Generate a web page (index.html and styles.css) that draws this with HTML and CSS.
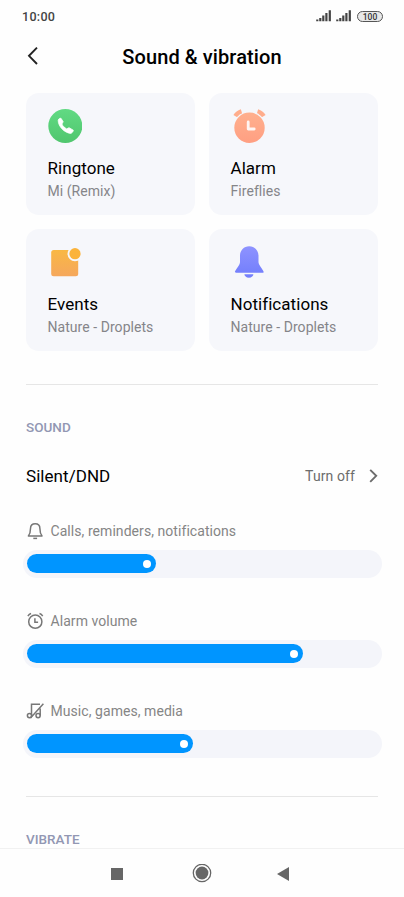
FILE: index.html
```html
<!DOCTYPE html>
<html lang="en">
<head>
  <meta charset="UTF-8">
  <meta name="viewport" content="width=device-width, initial-scale=1.0">
  <title>Sound &amp; vibration</title>
  <link rel="stylesheet" href="styles.css">
</head>
<body>
  <div class="status-bar">
    <span class="time">10:00</span>
    <div class="status-icons">
      <svg width="16" height="12" viewBox="0 0 16 12">
        <path d="M1.3 9.500v1.700M4.300 8v3.200M7.300 5.500v5.700M10.400 3v8.200M13.800 .2v11" stroke="#444" stroke-width="2.200"/>
      </svg>
      <svg width="16" height="12" viewBox="0 0 16 12">
        <path d="M1.3 9.500v1.700M4.300 8v3.200M7.300 5.500v5.700M10.400 3v8.200M13.800 .2v11" stroke="#444" stroke-width="2.200"/>
      </svg>
      <span class="battery">100</span>
    </div>
  </div>

  <header class="header">
    <svg width="12" height="20" viewBox="0 0 12 20">
      <path d="M11 1.600 3 9.800l8 8.200" fill="none" stroke="#222" stroke-width="1.900"/>
    </svg>
    <h1>Sound &amp; vibration</h1>
  </header>

  <main class="content">
    <div class="cards">
      <div class="card">
        <svg width="34" height="34" viewBox="0 0 34 34">
          <defs>
            <linearGradient id="green" x1="0" y1="0" x2="0" y2="1">
              <stop offset="0" stop-color="#61da83"/>
              <stop offset="1" stop-color="#50c66e"/>
            </linearGradient>
          </defs>
          <circle cx="17.300" cy="17" r="17" fill="url(#green)"/>
          <path d="M10.200 11.200c.3-1.400 1.600-2.100 2.800-1.900l2.200 3.500-1.300 2.200c.8 2 2.500 3.600 4.800 4.900l2.300-1.200 4.300 2.500c-.2 1.600-1.300 3-2.800 3.200-5.900-.6-12.500-7-12.300-13.200z" fill="#fff" stroke="#fff" stroke-width=".8" stroke-linejoin="round"/>
        </svg>
        <div class="card-title">Ringtone</div>
        <div class="card-sub">Mi (Remix)</div>
      </div>
      <div class="card">
        <svg width="36" height="34" viewBox="0 0 36 34">
          <defs>
            <linearGradient id="peach" x1="0" y1="0" x2="0" y2="1">
              <stop offset="0" stop-color="#ffb08e"/>
              <stop offset="1" stop-color="#ff9f82"/>
            </linearGradient>
          </defs>
          <path d="M4.300 7.200Q6.500 3.600 10.500 2.400M26.500 2.400Q30.500 3.600 32.700 7.200" fill="none" stroke="#ffad8c" stroke-width="4.400"/>
          <circle cx="18.500" cy="18.700" r="16.200" fill="#f6f7fb"/>
          <circle cx="18.500" cy="18.700" r="15.200" fill="url(#peach)"/>
          <path d="M17.200 13v7h6" fill="none" stroke="#fff5f2" stroke-width="2.800" stroke-linecap="round" stroke-linejoin="round"/>
        </svg>
        <div class="card-title">Alarm</div>
        <div class="card-sub">Fireflies</div>
      </div>
      <div class="card">
        <svg width="34" height="34" viewBox="0 0 34 34">
          <defs>
            <linearGradient id="orange" x1="0" y1="0" x2="0" y2="1">
              <stop offset="0" stop-color="#f9b844"/>
              <stop offset="1" stop-color="#f5a75c"/>
            </linearGradient>
          </defs>
          <rect x="3.200" y="5" width="27" height="26.300" rx="2.500" fill="url(#orange)"/>
          <circle cx="27" cy="8.700" r="7.500" fill="#f6f7fb"/>
          <circle cx="27" cy="8.700" r="5.600" fill="#fbb33a"/>
        </svg>
        <div class="card-title">Events</div>
        <div class="card-sub">Nature - Droplets</div>
      </div>
      <div class="card">
        <svg width="36" height="34" viewBox="0 0 36 34">
          <defs>
            <linearGradient id="violet" x1="0" y1="0" x2="0" y2="1">
              <stop offset="0" stop-color="#8e93ff"/>
              <stop offset="1" stop-color="#7580fc"/>
            </linearGradient>
          </defs>
          <path d="M18.200 1.200c5.400 0 9.300 4.200 9.300 9.500v6.600c0 2.200 2.500 5 4.800 8.700.7 1.200.1 1.800-.9 1.800H5.200c-1 0-1.700-.6-1-1.800C6.600 22.300 9 19.500 9 17.300v-6.600c0-5.300 3.900-9.500 9.200-9.500z" fill="url(#violet)"/>
          <path d="M13.400 29.300h9c0 1.500-1.800 3.500-4.500 3.500s-4.500-2-4.500-3.500z" fill="#7580fc"/>
        </svg>
        <div class="card-title">Notifications</div>
        <div class="card-sub">Nature - Droplets</div>
      </div>
    </div>

    <hr class="divider">

    <section>
      <h2>SOUND</h2>
      <div class="row">
        <span class="row-title">Silent/DND</span>
        <span class="row-value">Turn off</span>
        <svg width="9" height="14" viewBox="0 0 9 14">
          <path d="M1.200 .8 7.200 6.800l-6 6" fill="none" stroke="#6c6c6c" stroke-width="1.900"/>
        </svg>
      </div>

      <div class="volume">
        <div class="volume-label">
          <svg width="18" height="18" viewBox="0 0 18 18" fill="none" stroke="#777" stroke-width="1.500">
            <path d="M4.500 6.500C4.500 3.300 6.300 1.700 9.200 1.700s4.700 1.600 4.700 4.800c0 3.500.4 5.300 2.100 7.400H2.400c1.700-2.100 2.100-3.900 2.100-7.400z" stroke-linejoin="round"/>
            <path d="M7.300 16.400h3.800"/>
          </svg>
          Calls, reminders, notifications
        </div>
        <div class="slider"><div class="fill" style="width: 129px"></div></div>
      </div>

      <div class="volume">
        <div class="volume-label">
          <svg width="18" height="18" viewBox="0 0 18 18" fill="none" stroke="#777" stroke-width="1.500">
            <circle cx="9.300" cy="9.700" r="6.600"/>
            <path d="M8.900 6.200v4h3.200M1.900 4.100q1.200-2 3.200-2.600M13.500 1.500q2 .6 3.200 2.600"/>
          </svg>
          Alarm volume
        </div>
        <div class="slider"><div class="fill" style="width: 276px"></div></div>
      </div>

      <div class="volume">
        <div class="volume-label">
          <svg width="18" height="18" viewBox="0 0 18 18" fill="none" stroke="#777" stroke-width="1.500">
            <path d="M5.500 13.500V2.300h8.500M14.200 6.500v7M17.400 1.700 4.500 16"/>
            <circle cx="3.500" cy="13.600" r="2.100"/>
            <circle cx="12.100" cy="13.600" r="2.100"/>
          </svg>
          Music, games, media
        </div>
        <div class="slider"><div class="fill" style="width: 166px"></div></div>
      </div>
    </section>

    <hr class="divider">

    <section>
      <h2>VIBRATE</h2>
    </section>
  </main>

  <nav class="nav-bar">
    <svg width="12" height="12" viewBox="0 0 12 12"><rect width="12" height="12" fill="#666"/></svg>
    <svg width="20" height="20" viewBox="0 0 20 20">
      <circle cx="10" cy="9" r="8.700" fill="none" stroke="#666" stroke-width="1.300"/>
      <circle cx="10" cy="9" r="6.400" fill="#666"/>
    </svg>
    <svg class="nav-back" width="12" height="14" viewBox="0 0 12 14"><path d="M12 0v14L0 7z" fill="#666"/></svg>
  </nav>
</body>
</html>
```
FILE: styles.css
```css
* {
  box-sizing: border-box;
}
body {
  margin: 0;
  height: 897px;
  display: flex;
  flex-direction: column;
  overflow: hidden;
  font-family: Roboto, sans-serif;
  background-color: #fefefe;
  color: #000;
}
svg {
  display: block;
  flex-shrink: 0;
}
.status-bar {
  display: flex;
  align-items: center;
  justify-content: space-between;
  height: 32px;
  padding: 0 21px 0 22px;
}
.time {
  font-size: 12.5px;
  font-weight: 500;
  letter-spacing: 0.3px;
  color: #444;
}
.status-icons {
  display: flex;
  align-items: center;
  gap: 4px;
}
.battery {
  width: 26px;
  height: 11px;
  margin-left: 1px;
  border: 1px solid #555;
  border-radius: 6px;
  background-color: #e8e8e8;
  color: #333;
  font-size: 8.5px;
  font-weight: 500;
  line-height: 10px;
  text-align: center;
}
.header {
  display: grid;
  grid-template-columns: 12px 1fr 12px;
  align-items: center;
  height: 48px;
  padding: 0 26px;
}
h1 {
  margin: 1px 0 0;
  font-size: 20px;
  font-weight: 500;
  letter-spacing: 0.1px;
  text-align: center;
}
.content {
  flex: 1;
  min-height: 0;
  overflow: hidden;
  padding: 13px 26px 0;
}
.cards {
  display: grid;
  grid-template-columns: 1fr 1fr;
  gap: 14px;
}
.card {
  height: 122px;
  padding: 16px 21.5px 0;
  border-radius: 13px;
  background-color: #f6f7fb;
}
.card-title {
  margin-top: 13px;
  font-size: 17px;
  line-height: 24px;
  letter-spacing: 0.05px;
}
.card-sub {
  font-size: 14px;
  line-height: 22px;
  letter-spacing: 0.05px;
  color: #858589;
}
.divider {
  height: 1px;
  margin: 33px 0 32px;
  border: none;
  background-color: #e6e6e6;
}
h2 {
  margin: 0;
  font-size: 13.5px;
  font-weight: 500;
  line-height: 20px;
  color: #9297b3;
}
.row {
  display: flex;
  align-items: center;
  height: 48px;
  margin: 15px 0;
}
.row-title {
  flex: 1;
  font-size: 17px;
  letter-spacing: 0.05px;
}
.row-value {
  margin-right: 14px;
  font-size: 14px;
  letter-spacing: 0.1px;
  color: #6c6c6c;
}
.volume {
  margin-bottom: 27px;
}
.volume:last-child {
  margin-bottom: 38px;
}
.volume-label {
  display: flex;
  align-items: center;
  gap: 6.5px;
  height: 32px;
  margin-bottom: 3px;
  font-size: 14px;
  letter-spacing: 0.06px;
  color: #858585;
}
.slider {
  height: 28px;
  margin: 0 -4px 0 -3px;
  padding: 4px;
  border-radius: 14px;
  background-color: #f4f5fa;
}
.fill {
  display: flex;
  align-items: center;
  justify-content: flex-end;
  height: 19px;
  padding-right: 5px;
  border-radius: 10px;
  background-color: #0095ff;
}
.fill::after {
  content: "";
  width: 8px;
  height: 8px;
  border-radius: 50%;
  background-color: #fff;
}
.nav-bar {
  display: flex;
  align-items: center;
  justify-content: center;
  gap: 69px;
  height: 49px;
  padding: 1px 4px 0 0;
  border-top: 1px solid #f1f1f1;
}
.nav-back {
  margin-left: -4px;
}
```
